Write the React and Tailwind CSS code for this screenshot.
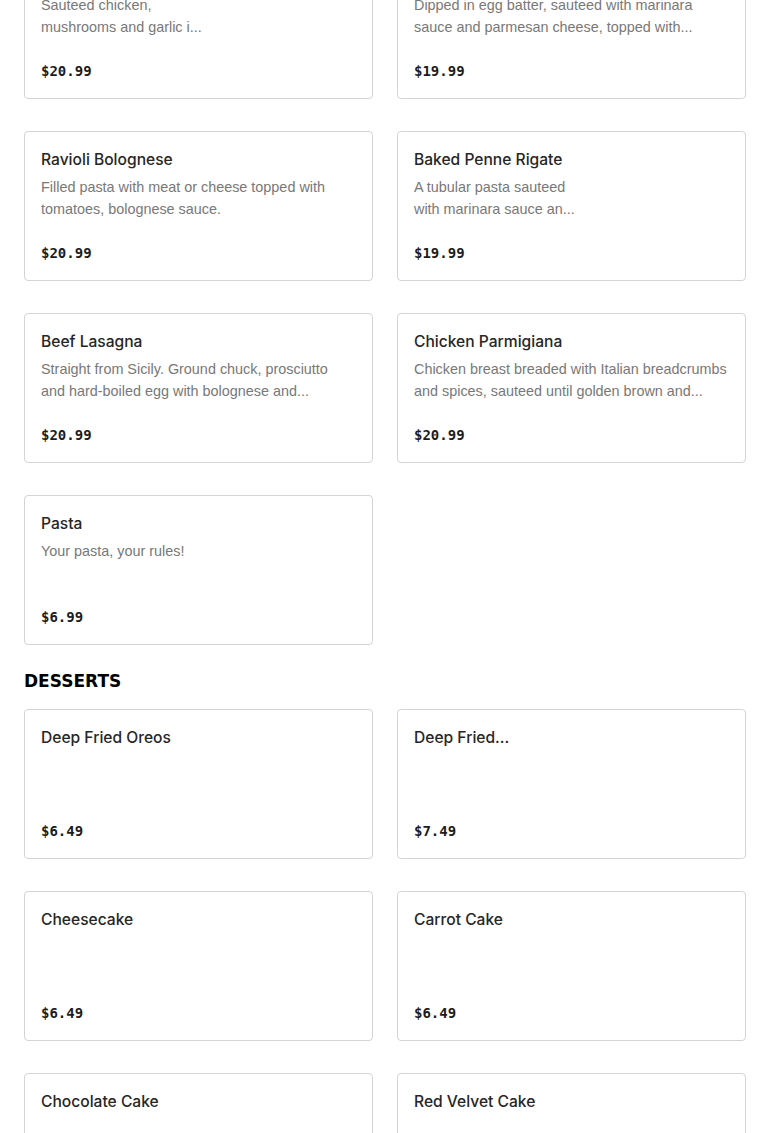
// Menu section – scrolled mid-page view (pasta + desserts)

const pasta = [
  { name: 'Chicken Marsala', desc: ['Sauteed chicken,', 'mushrooms and garlic i...'], price: '$20.99' },
  { name: 'Chicken Francese', desc: ['Dipped in egg batter, sauteed with marinara', 'sauce and parmesan cheese, topped with...'], price: '$19.99' },
  { name: 'Ravioli Bolognese', desc: ['Filled pasta with meat or cheese topped with', 'tomatoes, bolognese sauce.'], price: '$20.99' },
  { name: 'Baked Penne Rigate', desc: ['A tubular pasta sauteed', 'with marinara sauce an...'], price: '$19.99' },
  { name: 'Beef Lasagna', desc: ['Straight from Sicily. Ground chuck, prosciutto', 'and hard-boiled egg with bolognese and...'], price: '$20.99' },
  { name: 'Chicken Parmigiana', desc: ['Chicken breast breaded with Italian breadcrumbs', 'and spices, sauteed until golden brown and...'], price: '$20.99' },
  { name: 'Pasta', desc: ['Your pasta, your rules!'], price: '$6.99' },
];

const desserts = [
  { name: 'Deep Fried Oreos', desc: [], price: '$6.49' },
  { name: 'Deep Fried...', desc: [], price: '$7.49' },
  { name: 'Cheesecake', desc: [], price: '$6.49' },
  { name: 'Carrot Cake', desc: [], price: '$6.49' },
  { name: 'Chocolate Cake', desc: [], price: '$6.49' },
  { name: 'Red Velvet Cake', desc: [], price: '$6.49' },
];

function ItemCard({ item }) {
  return (
    <div className="flex flex-col h-[150px] border border-[#d4d4d4] rounded-[4px] bg-white px-4 pt-4 pb-[15px]">
      <h3 className="text-[15.6px] leading-6 font-medium text-[#262626] whitespace-nowrap font-['Inter',sans-serif]">{item.name}</h3>
      <div className="mt-1 h-[44px] text-[14.4px] leading-[22px] text-[#787878]">
        {item.desc.map((line) => (
          <p key={line} className="whitespace-nowrap">{line}</p>
        ))}
      </div>
      <p className="mt-auto text-[14px] leading-6 font-bold text-[#1c1c1c] font-['DejaVu_Sans_Mono',monospace]">{item.price}</p>
    </div>
  );
}

export default function App() {
  return (
    <div className="h-[1133px] overflow-hidden bg-white font-['Liberation_Sans',Arial,sans-serif]">
      <div className="-mt-[51px] px-6">
        <div className="grid grid-cols-2 gap-x-6 gap-y-8">
          {pasta.map((item) => <ItemCard key={item.name} item={item} />)}
        </div>

        <h2 className="mt-6 mb-4 text-[17px] leading-6 font-bold text-black font-['DejaVu_Sans',sans-serif]">DESSERTS</h2>

        <div className="grid grid-cols-2 gap-x-6 gap-y-8">
          {desserts.map((item) => <ItemCard key={item.name} item={item} />)}
        </div>
      </div>
    </div>
  );
}
